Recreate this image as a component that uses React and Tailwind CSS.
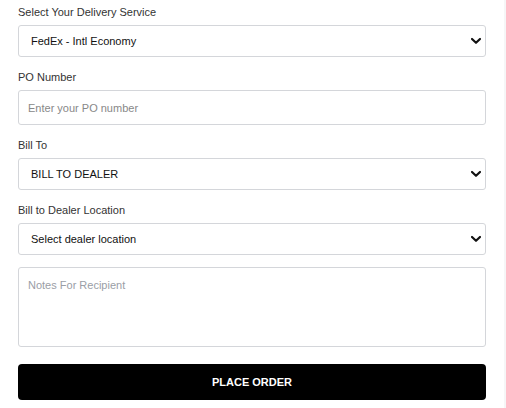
import React from "react";

function Chevron() {
  return (
    <svg className="pointer-events-none absolute right-[4px] top-1/2 -translate-y-1/2" width="12" height="7" viewBox="0 0 12 7" fill="none">
      <path d="M2 1.5 L6 5.3 L10 1.5" stroke="#111" strokeWidth="2.2" strokeLinecap="round" strokeLinejoin="round" />
    </svg>
  );
}

function Label({ children }) {
  return <div className="text-[11px] leading-[16px] text-[#333] mb-[5px]">{children}</div>;
}

function Select({ value }) {
  return (
    <div className="relative">
      <select
        defaultValue={value}
        className="appearance-none w-full h-[32px] border border-[#d4d6da] rounded-[3px] bg-white pl-[12px] text-[11px] text-[#111] outline-none"
        style={{ fontFamily: "'Liberation Sans', Arial, sans-serif" }}
      >
        <option>{value}</option>
      </select>
      <Chevron />
    </div>
  );
}

export default function App() {
  return (
    <div className="w-[506px] h-[408px] bg-white flex" style={{ fontFamily: "'Liberation Sans', Arial, sans-serif" }}>
      <div className="flex-1 pl-[18px] pr-[18px] pt-[4px] flex flex-col">
        <Label>Select Your Delivery Service</Label>
        <Select value="FedEx - Intl Economy" />
        <div className="mt-[12px]">
          <Label>PO Number</Label>
          <input
            placeholder="Enter your PO number"
            className="w-full h-[35px] border border-[#d4d6da] rounded-[3px] bg-white pl-[9px] text-[11px] placeholder:text-[#888] outline-none"
          />
        </div>
        <div className="mt-[12px]">
          <Label>Bill To</Label>
          <Select value="BILL TO DEALER" />
        </div>
        <div className="mt-[12px]">
          <Label>Bill to Dealer Location</Label>
          <Select value="Select dealer location" />
        </div>
        <textarea
          placeholder="Notes For Recipient"
          className="mt-[12px] w-full h-[80px] border border-[#d4d6da] rounded-[3px] bg-white px-[9px] pt-[9px] text-[11px] leading-[16px] placeholder:text-[#9a9ea6] outline-none resize-none"
        />
        <button className="mt-[17px] w-full h-[36px] bg-black text-white rounded-[4px] text-[11px] font-bold">
          PLACE ORDER
        </button>
      </div>
      <div className="w-[2px] bg-[#f6f6f7]" />
    </div>
  );
}
